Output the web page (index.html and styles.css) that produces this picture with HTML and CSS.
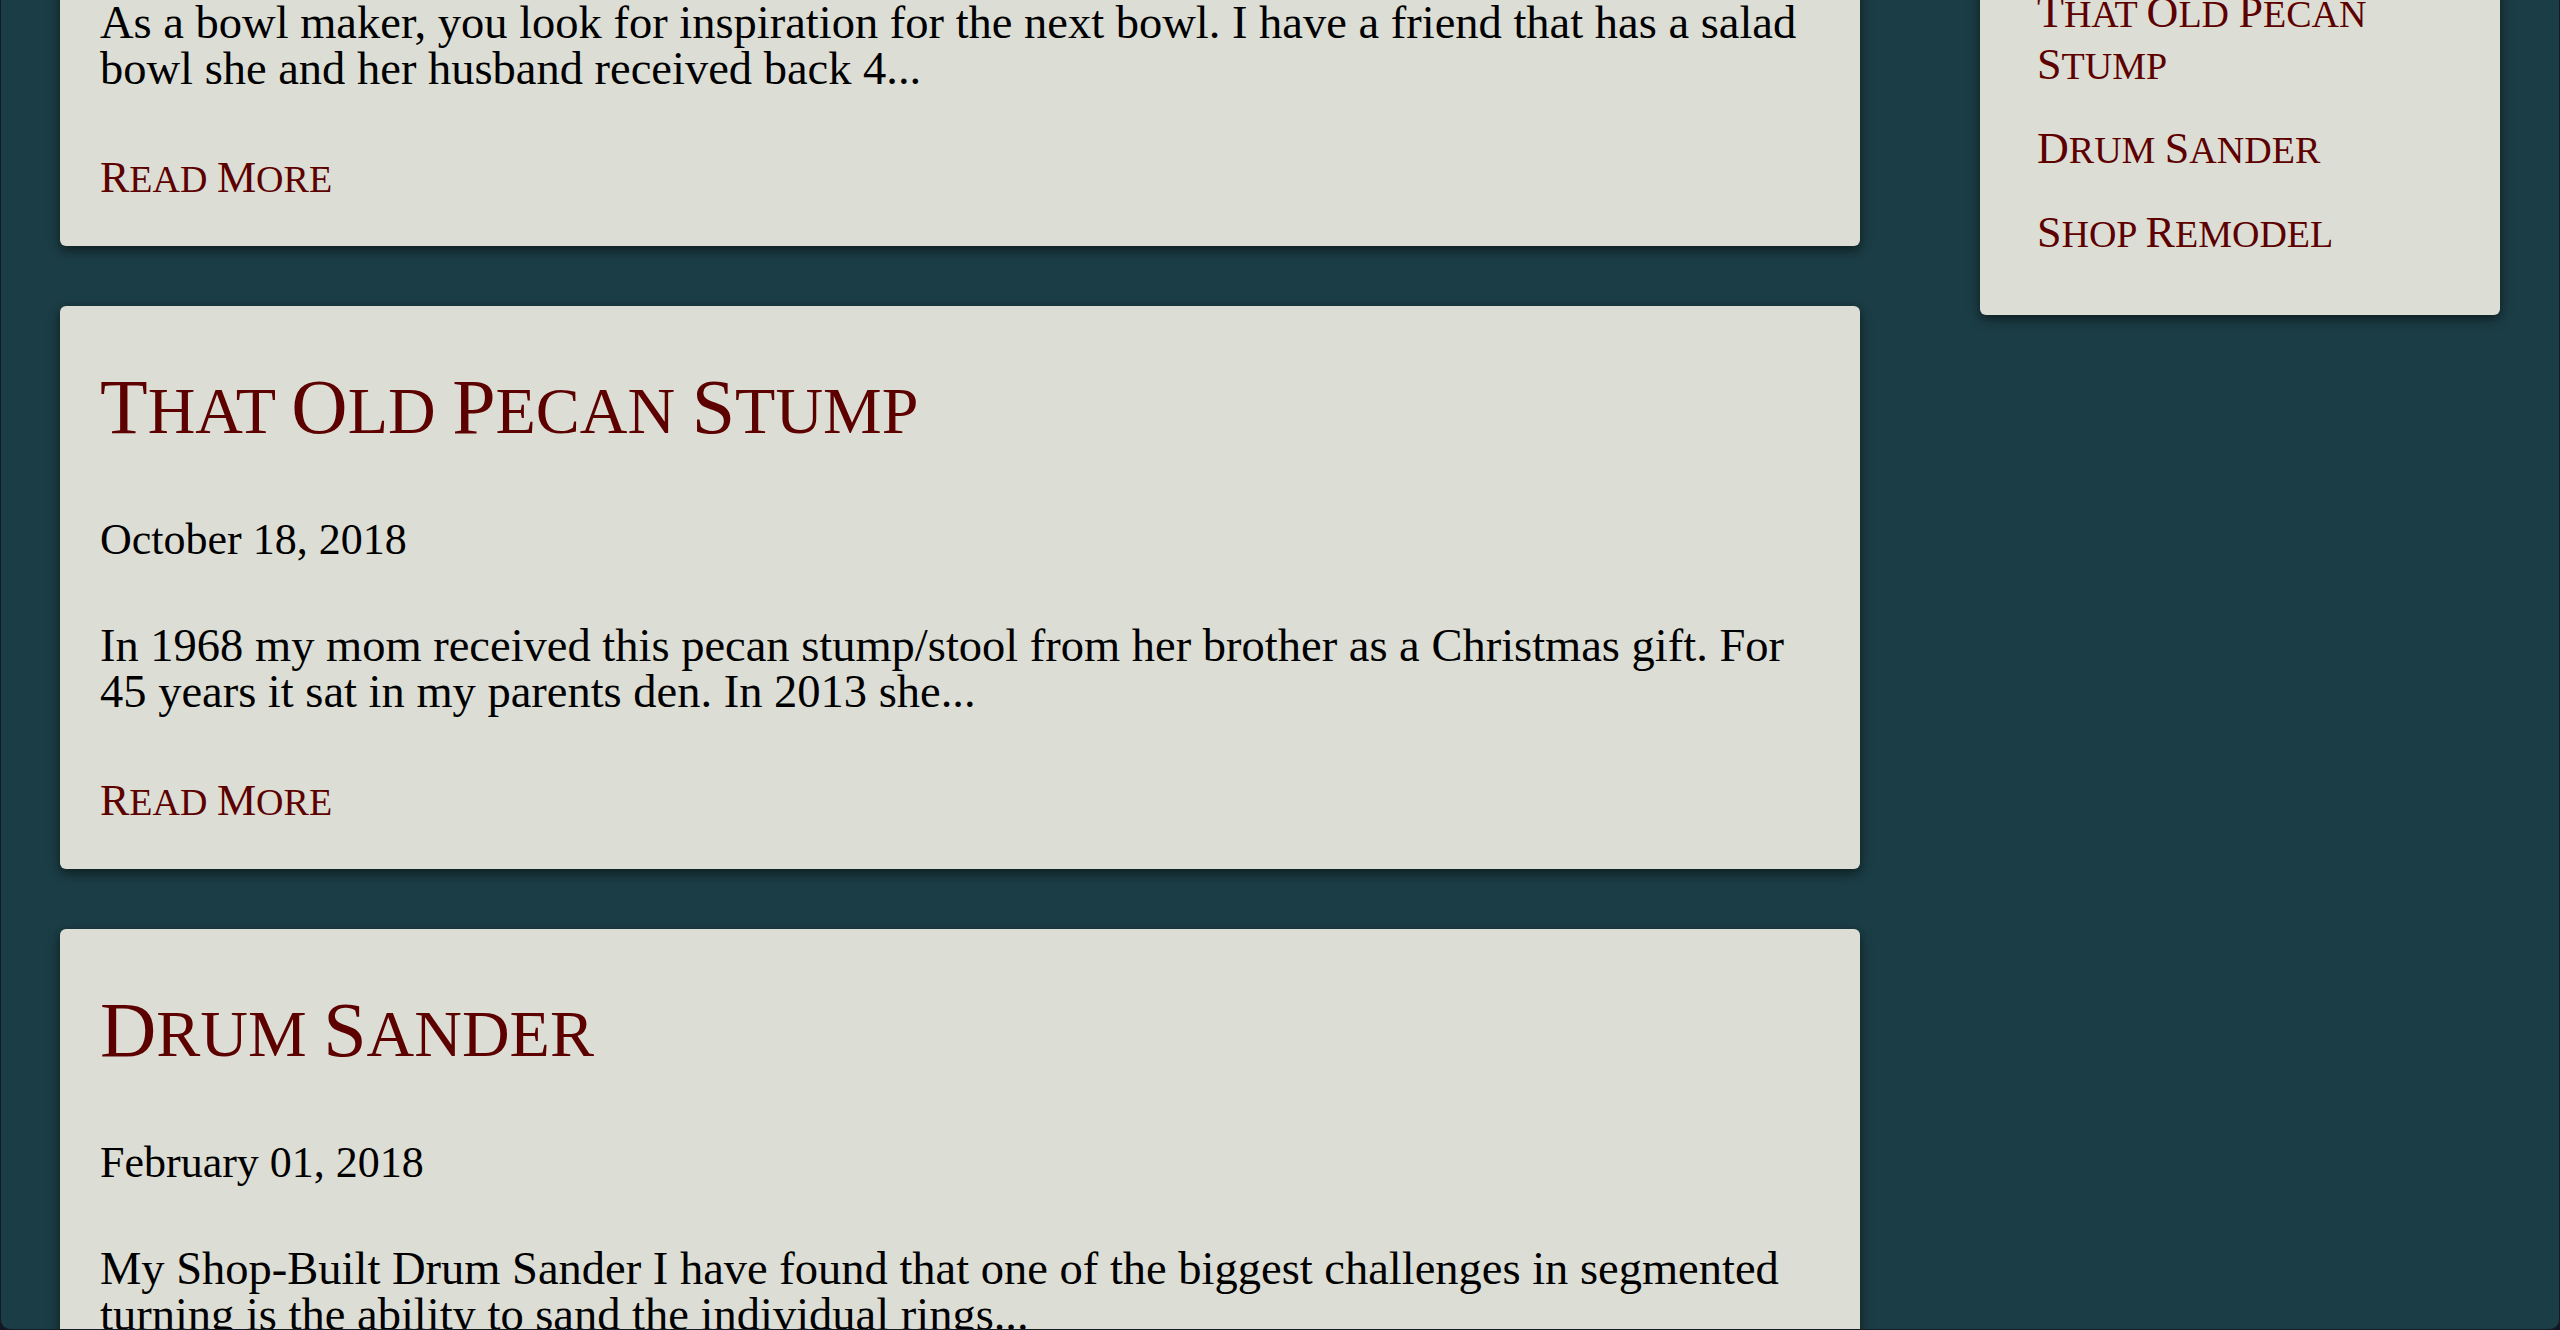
FILE: index.html
```html
<!DOCTYPE html>
<html lang="en">
<head>
<meta charset="utf-8">
<title>Blog</title>
<link rel="stylesheet" href="styles.css">
</head>
<body>
<div class="window">
  <div class="layout">
    <main class="posts">
      <article class="post post--clipped">
        <p class="excerpt">As a bowl maker, you look for inspiration for the next bowl. I have a friend that has a salad bowl she and her husband received back 4...</p>
        <a class="more" href="#"><span class="ini">R</span>ead <span class="ini">M</span>ore</a>
      </article>
      <article class="post">
        <h2 class="post-title"><span class="ini">T</span>hat <span class="ini">O</span>ld <span class="ini">P</span>ecan <span class="ini">S</span>tump</h2>
        <p class="date">October 18, 2018</p>
        <p class="excerpt">In 1968 my mom received this pecan stump/stool from her brother as a Christmas gift. For 45 years it sat in my parents den. In 2013 she...</p>
        <a class="more" href="#"><span class="ini">R</span>ead <span class="ini">M</span>ore</a>
      </article>
      <article class="post">
        <h2 class="post-title"><span class="ini">D</span>rum <span class="ini">S</span>ander</h2>
        <p class="date">February 01, 2018</p>
        <p class="excerpt">My Shop-Built Drum Sander I have found that one of the biggest challenges in segmented turning is the ability to sand the individual rings...</p>
        <a class="more" href="#"><span class="ini">R</span>ead <span class="ini">M</span>ore</a>
      </article>
    </main>
    <aside class="sidebar">
      <div class="sidebar-card">
        <ul class="recent">
          <li><a href="#"><span class="ini">T</span>hat <span class="ini">O</span>ld <span class="ini">P</span>ecan <span class="ini">S</span>tump</a></li>
          <li><a href="#"><span class="ini">D</span>rum <span class="ini">S</span>ander</a></li>
          <li><a href="#"><span class="ini">S</span>hop <span class="ini">R</span>emodel</a></li>
        </ul>
      </div>
    </aside>
  </div>
</div>
</body>
</html>
```
FILE: styles.css
```css
html {
  background: #121822;
}
body {
  margin: 0;
  font-family: "Liberation Serif", "Times New Roman", serif;
  color: #000;
}
.window {
  height: 100vh;
  box-sizing: border-box;
  border: 1px solid #151b25;
  border-top: 0;
  border-radius: 0 0 10px 10px;
  background: #1b3d45;
  overflow: hidden;
}
.layout {
  display: flex;
  align-items: flex-start;
  gap: 120px;
  padding: 0 59px;
}
.posts {
  width: 1800px;
  flex: none;
  display: flex;
  flex-direction: column;
  gap: 60px;
}
.post {
  background: #dcddd4;
  border-radius: 6px;
  box-shadow: 0 4px 12px rgba(0, 0, 0, 0.55);
  padding: 40px 40px 44px;
}
.post--clipped {
  margin-top: -40px;
}
.ini {
  line-height: 0;
}
.post-title {
  margin: 25px 0 0;
  font-weight: 400;
  font-size: 66px;
  line-height: 80px;
  text-transform: uppercase;
  color: #5c0000;
}
.post-title .ini {
  font-size: 78px;
}
.date {
  margin: 66px 0 0;
  font-size: 44px;
  line-height: 46px;
}
.excerpt {
  margin: 60px 0 0;
  font-size: 46.5px;
  line-height: 46px;
}
.post--clipped .excerpt {
  margin-top: 0;
}
.more {
  display: block;
  margin-top: 64px;
  font-size: 38px;
  line-height: 46px;
  text-transform: uppercase;
  color: #5c0000;
  text-decoration: none;
}
.more .ini,
.recent .ini {
  font-size: 44px;
}
.sidebar {
  width: 520px;
  flex: none;
}
.sidebar-card {
  margin-top: -52px;
  padding: 40px 57px 55px;
  background: #dcddd4;
  border-radius: 6px;
  box-shadow: 0 4px 12px rgba(0, 0, 0, 0.55);
}
.recent {
  list-style: none;
  margin: 0;
  padding: 0;
  display: flex;
  flex-direction: column;
  gap: 32px;
}
.recent li {
  font-size: 38px;
  line-height: 52px;
}
.recent a {
  text-transform: uppercase;
  color: #5c0000;
  text-decoration: none;
}
```
